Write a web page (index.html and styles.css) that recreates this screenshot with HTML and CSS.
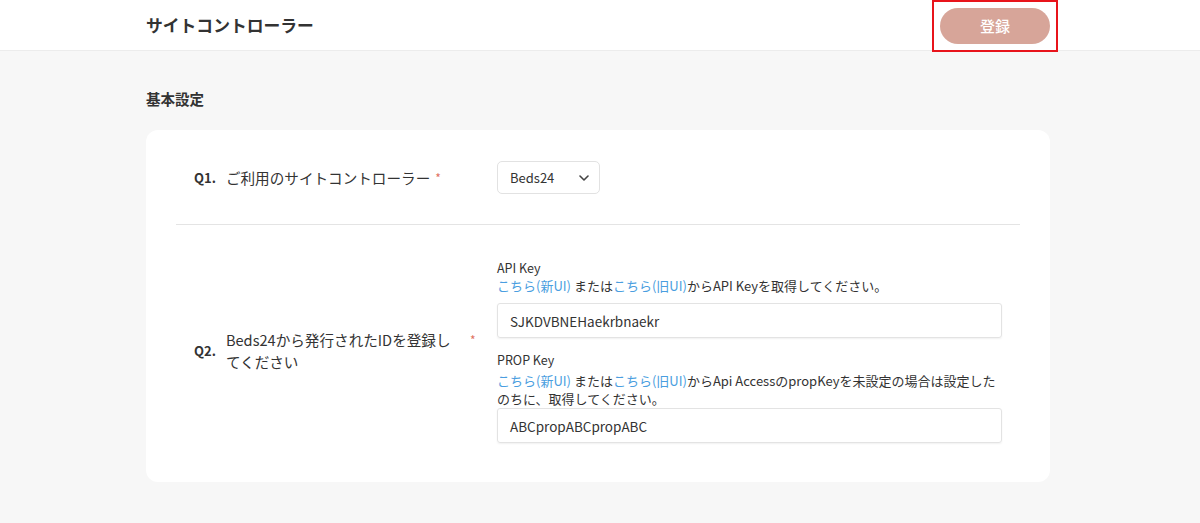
FILE: index.html
```html
<!DOCTYPE html>
<html lang="ja">
<head>
    <meta charset="UTF-8">
    <meta name="viewport" content="width=device-width, initial-scale=1.0">
    <title>サイトコントローラー</title>
    <link rel="stylesheet" href="styles.css">
</head>
<body>

    <!-- Header -->
    <div class="header">
        <h1 class="page-title">サイトコントローラー</h1>
        <div class="highlight">
            <button class="save-btn">登録</button>
        </div>
    </div>

    <!-- Content -->
    <div class="content">
        <h2 class="section-title">基本設定</h2>

        <div class="card">
            <div class="row row-first">
                <div class="q-label">
                    <span class="q-num">Q1.</span>
                    <span class="q-text">ご利用のサイトコントローラー</span>
                    <span class="required">*</span>
                </div>
                <div class="q-field">
                    <div class="select">
                        <span>Beds24</span>
                        <svg width="10" height="6" viewBox="0 0 10 6"><path d="M1 1l4 4 4-4" fill="none" stroke="#444" stroke-width="1.6" stroke-linecap="round" stroke-linejoin="round"/></svg>
                    </div>
                </div>
            </div>

            <div class="row row-second">
                <div class="q-label">
                    <span class="q-num">Q2.</span>
                    <span class="q-text q-text-wrap">Beds24から発行されたIDを登録してください</span>
                    <span class="required">*</span>
                </div>
                <div class="q-field">
                    <div class="field-label">API Key</div>
                    <p class="help">
                        <a href="#">こちら(新UI)</a> または<a href="#">こちら(旧UI)</a>からAPI Keyを取得してください。
                    </p>
                    <div class="text-input">SJKDVBNEHaekrbnaekr</div>

                    <div class="field-label field-label-next">PROP Key</div>
                    <p class="help help-tight">
                        <a href="#">こちら(新UI)</a> または<a href="#">こちら(旧UI)</a>からApi AccessのpropKeyを未設定の場合は設定したのちに、取得してください。
                    </p>
                    <div class="text-input">ABCpropABCpropABC</div>
                </div>
            </div>
        </div>
    </div>

</body>
</html>
```

FILE: styles.css
```css
body {
    font-family: "Noto Sans CJK JP", "Noto Sans", sans-serif;
    margin: 0;
    padding: 0;
    background-color: #f7f7f7;
    color: #333;
}

.header {
    background-color: #fff;
    height: 50px;
    border-bottom: 1px solid #ececec;
    display: flex;
    align-items: center;
    justify-content: space-between;
    padding: 0 142px 0 146px;
}

.page-title {
    font-size: 16.8px;
    font-weight: bold;
    margin: 0;
    color: #333;
}

.highlight {
    border: 2px solid #e8141b;
    padding: 6px 6px;
    align-self: flex-start;
}

.save-btn {
    display: block;
    width: 110px;
    height: 36px;
    border: none;
    border-radius: 18px;
    background-color: #d7a599;
    color: #fff;
    font-family: inherit;
    font-size: 15px;
    font-weight: 500;
    padding-bottom: 2px;
}

.content {
    padding: 0 150px 0 146px;
}

.section-title {
    font-size: 14.5px;
    font-weight: bold;
    margin: 0;
    padding: 38px 0 21px;
    line-height: 20px;
}

.card {
    background-color: #fff;
    border-radius: 12px;
    padding: 0 30px;
}

.row {
    display: flex;
    align-items: center;
    padding: 0 18px;
}

.row-first {
    padding-top: 31px;
    padding-bottom: 30px;
    border-bottom: 1px solid #e4e4e4;
}

.row-second {
    padding-top: 34px;
    padding-bottom: 39px;
}

.q-label {
    width: 303px;
    flex-shrink: 0;
    display: flex;
    align-items: center;
    font-size: 14.6px;
    line-height: 22px;
}

.q-num {
    font-weight: bold;
    font-size: 13px;
    margin-right: 10px;
}

.q-text-wrap {
    width: 232px;
    margin-right: 7px;
}

.required {
    color: #e0725f;
    font-size: 12px;
    margin-left: 5px;
    align-self: flex-start;
}

.q-field {
    flex: 1;
}

.select {
    width: 103px;
    height: 33px;
    box-sizing: border-box;
    border: 1px solid #e2e2e2;
    border-radius: 5px;
    display: flex;
    align-items: center;
    justify-content: space-between;
    padding: 0 10px 0 12px;
    font-size: 13px;
}

.field-label {
    font-size: 12.5px;
    line-height: 18px;
}

.field-label-next {
    margin-top: 13px;
    margin-bottom: 3px;
}

.help {
    font-size: 13px;
    line-height: 18px;
    margin: 0 0 8px;
}

.help-tight {
    margin-bottom: 0;
}

.help a {
    color: #4a9ee0;
    text-decoration: none;
}

.text-input {
    height: 35px;
    box-sizing: border-box;
    border: 1px solid #e3e3e3;
    border-radius: 3px;
    box-shadow: 0 1px 2px rgba(0, 0, 0, 0.06);
    display: flex;
    align-items: center;
    padding: 0 12px;
    font-size: 13.5px;
}
```
